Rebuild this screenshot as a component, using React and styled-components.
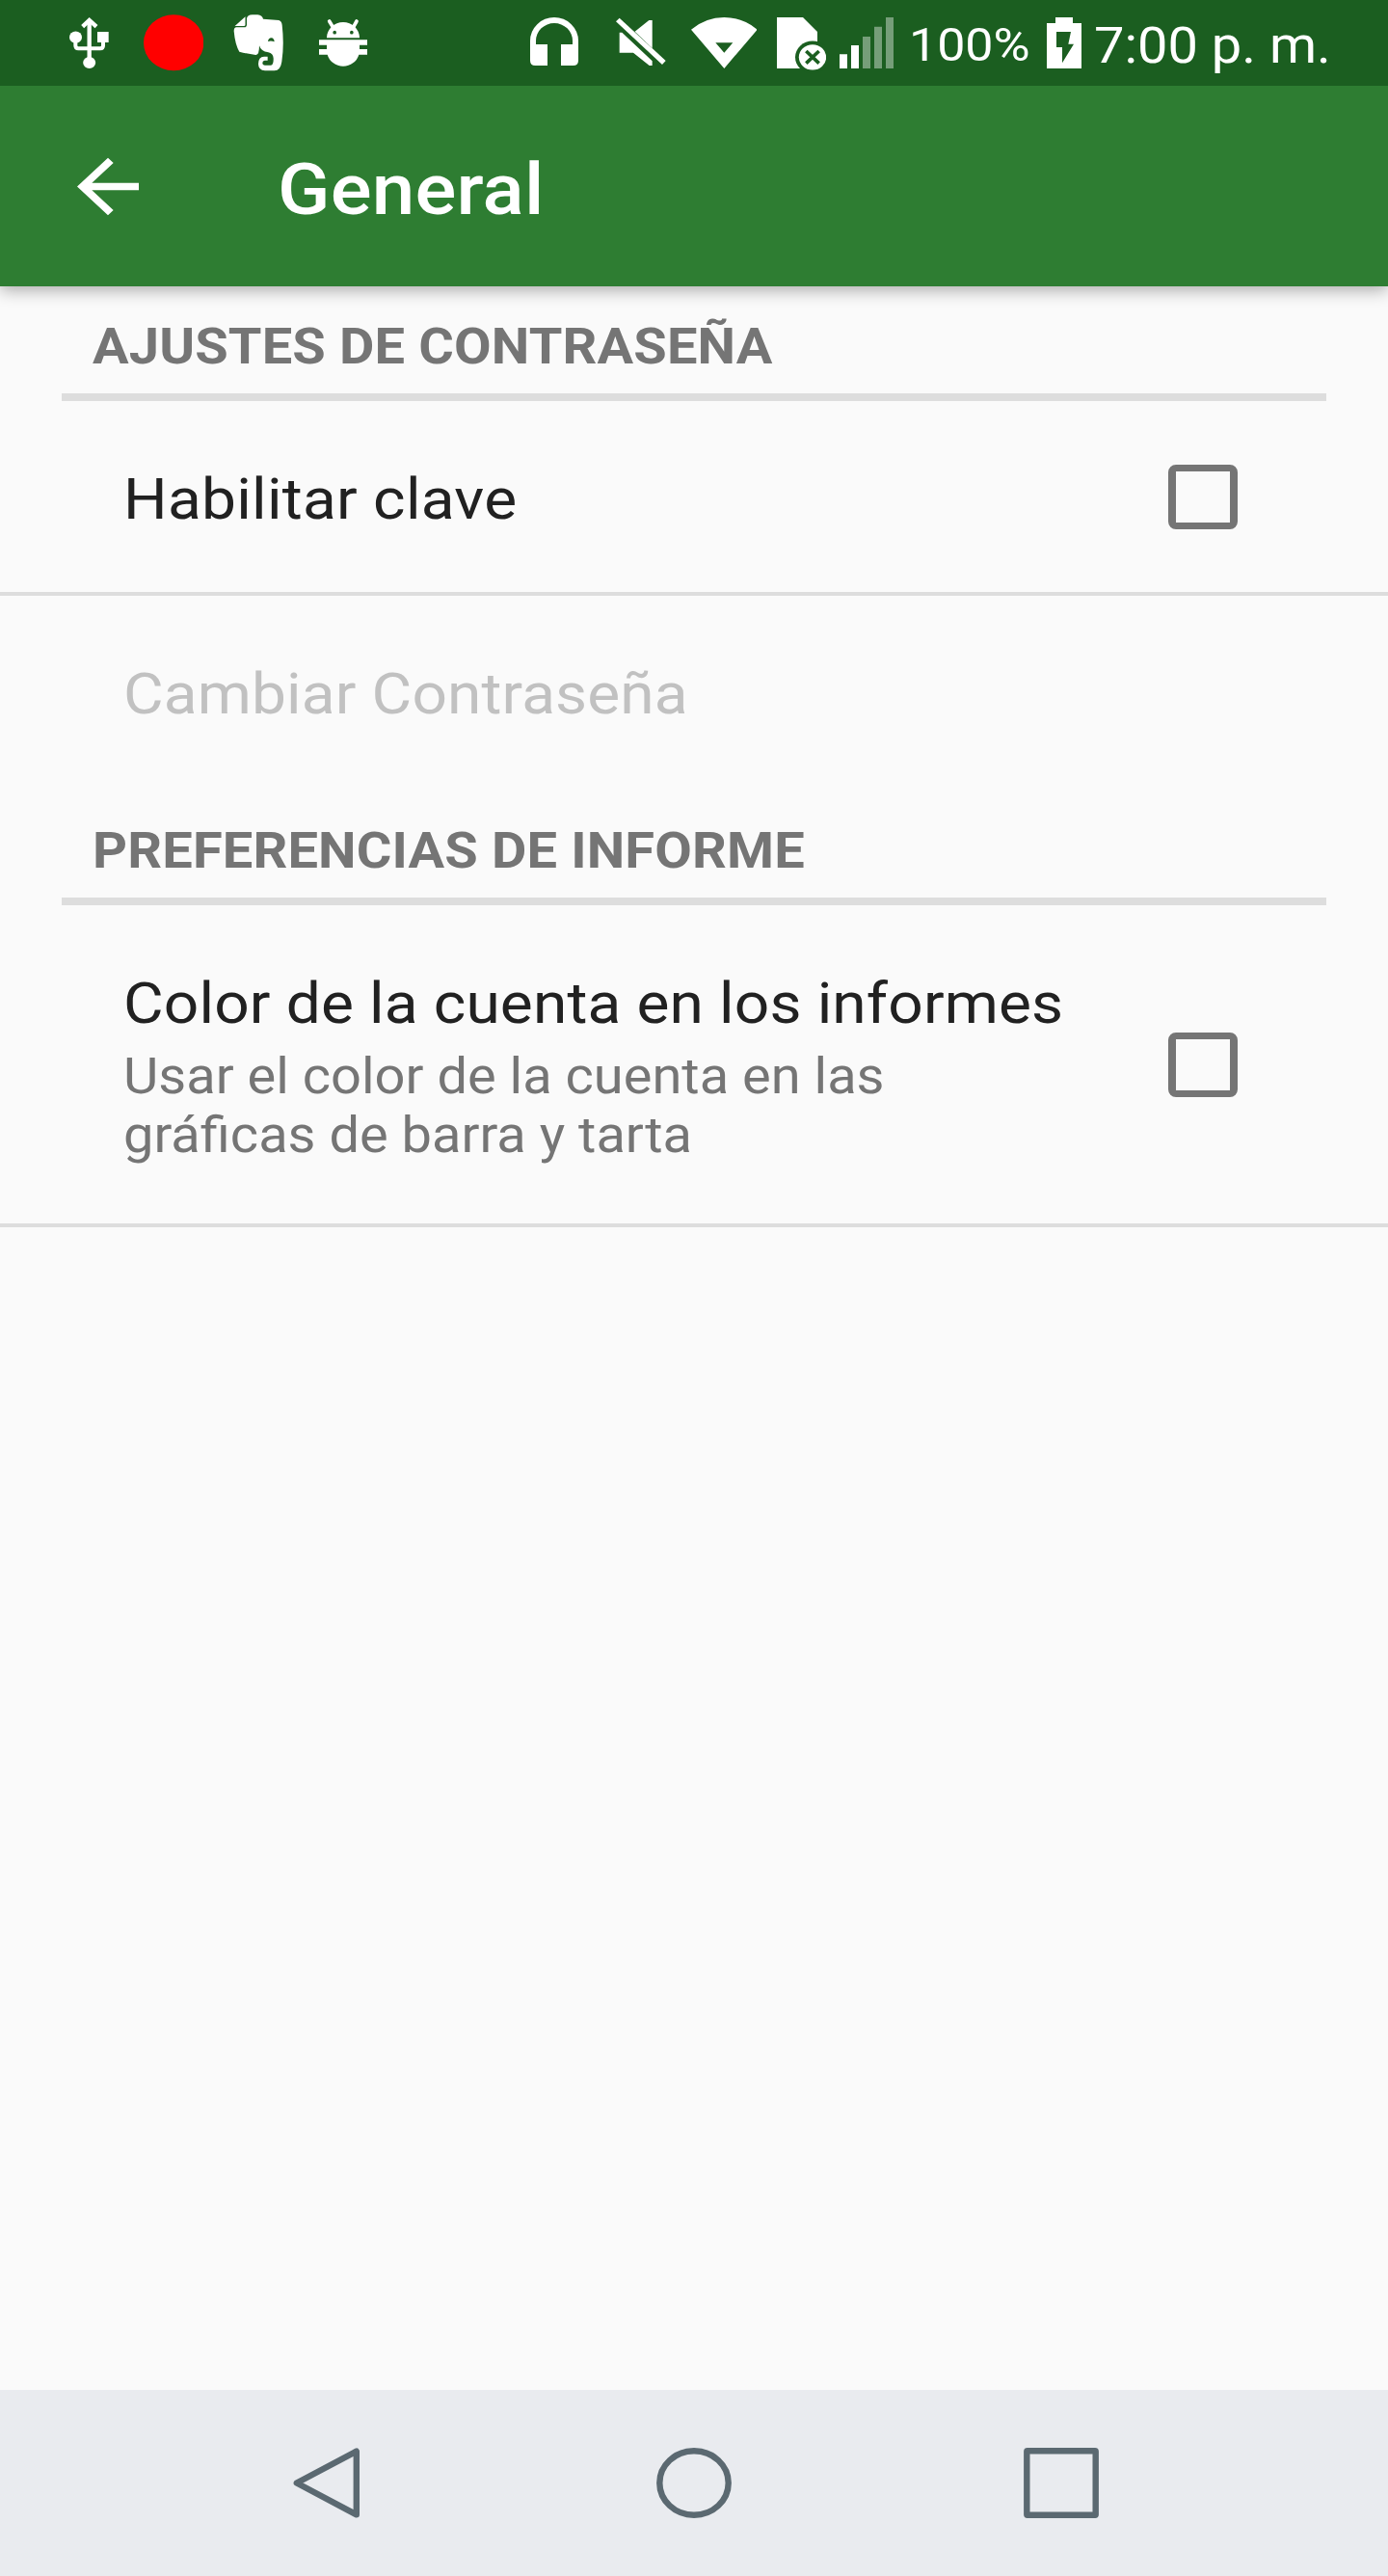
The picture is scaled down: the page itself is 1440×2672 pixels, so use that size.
import React from "react";
import styled, { createGlobalStyle } from "styled-components";

const GlobalStyle = createGlobalStyle`
  html, body { margin: 0; padding: 0; background: #fafafa; }
  *, *::before, *::after { box-sizing: border-box; }
`;

const Screen = styled.div`
  display: flex;
  flex-direction: column;
  width: 1440px;
  height: 2672px;
  overflow: hidden;
  background: #fafafa;
  color: #212121;
  font-family: Roboto, "Liberation Sans", sans-serif;
`;

/* The display is slightly squashed vertically, so glyphs are too. */
const Label = styled.span`
  display: block;
  white-space: nowrap;
  font-size: ${(p) => p.$size}px;
  line-height: ${(p) => p.$line}px;
  font-weight: ${(p) => p.$weight || 400};
  letter-spacing: ${(p) => p.$track || 0}px;
  color: ${(p) => p.$color || "inherit"};
  transform: scaleY(0.9278);
`;

const StatusBar = styled.header`
  display: flex;
  flex: none;
  position: relative;
  z-index: 1;
  height: 89px;
  padding-left: 72px;
  background: #1b5e20;
  color: #fff;
`;

const StatusGlyph = styled.svg`
  display: block;
  flex: none;
  width: ${(p) => p.$w}px;
  height: 89px;
  margin-left: ${(p) => p.$gap || 0}px;
  fill: #fff;
`;

const StatusText = styled.div`
  flex: none;
  width: ${(p) => p.$w}px;
  margin-left: ${(p) => p.$gap}px;
  padding-top: ${(p) => p.$top}px;
`;

const AppBar = styled.div`
  display: flex;
  align-items: center;
  flex: none;
  position: relative;
  height: 208px;
  padding-left: 64px;
  background: #2e7d32;
  color: #fff;
  box-shadow: 0 4px 16px rgba(0, 0, 0, 0.32);
`;

const BackButton = styled.button`
  display: block;
  width: 96px;
  height: 89px;
  padding: 0;
  border: 0;
  background: none;
  margin: 0 128px 0 0;
  svg { display: block; width: 96px; height: 89px; fill: #fff; }
`;

const Title = styled.h1`
  margin: 7px 0 0;
`;

const Settings = styled.main`
  flex: 1;
`;

const SectionHeader = styled.h2`
  height: 119px;
  margin: 0 64px;
  padding: 30px 32px 0;
  border-bottom: 8px solid #dddddd;
`;

const Row = styled.div`
  display: flex;
  align-items: center;
  justify-content: space-between;
  height: ${(p) => p.$height}px;
  padding: 0 156px 0 128px;
  border-bottom: ${(p) => (p.$divided ? "4px solid #dddddd" : "0")};
`;

const RowText = styled.div`
  display: flex;
  flex-direction: column;
  gap: 3px;
  padding-top: ${(p) => p.$shift}px;
`;

const Checkbox = styled.span`
  display: block;
  flex: none;
  width: 72px;
  height: 67px;
  border: solid #757575;
  border-width: 7px 8px;
  border-radius: 8px;
`;

const NavBar = styled.nav`
  display: flex;
  align-items: center;
  flex: none;
  height: 193px;
  padding-left: 304px;
  background: #e9ebef;
`;

const NavGlyph = styled.svg`
  display: block;
  width: ${(p) => p.$w}px;
  height: 73px;
  margin-left: ${(p) => p.$gap || 0}px;
  fill: none;
  stroke: #5b6971;
  stroke-width: 6.4;
  stroke-linejoin: round;
`;

// Status glyphs are drawn on a grid of three units per pixel.
function Glyph({ x, w, gap, children }) {
  return (
    <StatusGlyph $w={w / 3} $gap={gap} viewBox={`${x} 0 ${w} 267`}>
      {children}
    </StatusGlyph>
  );
}

function UsbIcon() {
  return (
    <Glyph x={96} w={123}>
      <g fill="none" stroke="#fff" strokeWidth="12">
        <path d="M158 64V195" strokeWidth="13" />
        <path d="M137 83L158 63L180 83" strokeWidth="13" />
        <path d="M115 116V142Q115 151 124 151H192Q201 151 201 142V130" />
      </g>
      <ellipse cx="115.500" cy="116" rx="19.500" ry="18.500" />
      <ellipse cx="158" cy="195" rx="19.500" ry="18" />
      <path d="M183 99H218V132H183Z" />
    </Glyph>
  );
}

function RecordIcon() {
  return (
    <Glyph x={327} w={187} gap={36}>
      <ellipse cx="420.500" cy="133" rx="93.500" ry="87" fill="#ff0000" />
    </Glyph>
  );
}

function ElephantIcon() {
  return (
    <Glyph x={606} w={158} gap={30.667}>
      <path d="M648 57Q650 47 665 46H682Q697 48 699 59L748 63Q757 66 758 78Q765 140 757 192Q753 220 734 220H705Q684 219 684 199Q684 177 702 176H713V188H704Q697 189 697 196Q697 203 705 203H723Q732 202 731 181Q730 166 715 163Q692 160 687 142Q687 172 676 171Q650 168 625 161Q612 140 608 97Q608 85 616 85H640Q648 85 648 78Z" />
      <path d="M611 81L643.500 52V77Q643.500 81 639 81Z" />
      <path d="M714 129Q716 117 725 118Q733 119 734 130Q724 126 714 129Z" fill="#1b5e20" />
    </Glyph>
  );
}

function DebugIcon() {
  return (
    <Glyph x={873} w={150} gap={36.333}>
      <path d="M905 66L917 86M990 66L979 86" stroke="#fff" strokeWidth="11" strokeLinecap="round" />
      <path d="M897 118A51 49 0 0 1 999 118Z" />
      <path d="M873 124H1023V140H999V153H1023V170H997A51 50 0 0 1 899 170H873V153H897V140H873Z" />
      <circle cx="921.500" cy="101" r="5.500" fill="#1b5e20" />
      <circle cx="974.500" cy="101" r="5.500" fill="#1b5e20" />
    </Glyph>
  );
}

function HeadsetIcon() {
  return (
    <Glyph x={90} w={150} gap={169}>
      <path d="M90 127A75 73 0 0 1 240 127V188Q240 204 224 204H186V138H222V127A57 55 0 0 0 108 127V138H144V204H106Q90 204 90 188Z" />
    </Glyph>
  );
}

function MutedIcon() {
  return (
    <Glyph x={358} w={155} gap={39.333}>
      <path d="M369 56L513 189L502 201L358 67Z" />
      <path d="M369 101H377L471 190V204H462L412 164H369Z" />
      <path d="M417 98L461 63H471V150Z" />
    </Glyph>
  );
}

function WifiIcon() {
  return (
    <Glyph x={590} w={206} gap={25.667}>
      <path fillRule="evenodd" d="M590 92Q636 54 693 54Q750 54 796 92L693 213ZM666 133L693 164L720 133Z" />
    </Glyph>
  );
}

function NoSimIcon() {
  return (
    <Glyph x={858} w={154} gap={20.667}>
      <path d="M858 54H939L984 99V213H858Z" />
      <ellipse cx="969" cy="178" rx="54" ry="50.500" fill="#1b5e20" />
      <ellipse cx="969" cy="178" rx="42.500" ry="39.500" />
      <path d="M949 159L989 197M989 159L949 197" stroke="#1b5e20" strokeWidth="11" />
    </Glyph>
  );
}

function SignalIcon() {
  return (
    <Glyph x={1053} w={168} gap={13.667}>
      <path d="M1053 169H1077V213H1053ZM1089 141H1113V213H1089Z" />
      <path
        fillOpacity="0.4"
        d="M1125 114H1149V213H1125ZM1161 83H1185V213H1161ZM1197 54H1221V213H1197Z"
      />
    </Glyph>
  );
}

function BatteryIcon() {
  return (
    <Glyph x={498} w={108} gap={19}>
      <path
        fillRule="evenodd"
        d="M525 54H579V72H606V213H498V72H525ZM528 99V147H546V196L582 137H565L573 99Z"
      />
    </Glyph>
  );
}

export default function App() {
  return (
    <Screen>
      <GlobalStyle />
      <StatusBar>
        <UsbIcon />
        <RecordIcon />
        <ElephantIcon />
        <DebugIcon />
        <HeadsetIcon />
        <MutedIcon />
        <WifiIcon />
        <NoSimIcon />
        <SignalIcon />
        <StatusText $w={124} $gap={16} $top={15}>
          <Label $size={52} $line={64}>100%</Label>
        </StatusText>
        <BatteryIcon />
        <StatusText $w={260} $gap={13} $top={15}>
          <Label $size={56} $line={64}>7:00 p. m.</Label>
        </StatusText>
      </StatusBar>

      <AppBar>
        <BackButton aria-label="Atrás">
          <svg viewBox="0 0 24 24" preserveAspectRatio="none">
            <path d="M20 11H7.830l5.590-5.590L12 4l-8 8 8 8 1.410-1.410L7.830 13H20v-2z" />
          </svg>
        </BackButton>
        <Title>
          <Label $size={80} $line={96} $weight={500} $track={0.2}>General</Label>
        </Title>
      </AppBar>

      <Settings>
        <SectionHeader>
          <Label $size={56} $line={64} $weight={700} $track={0.14} $color="#757575">AJUSTES DE CONTRASEÑA</Label>
        </SectionHeader>
        <Row $height={202} $divided>
          <RowText $shift={7}>
            <Label $size={64} $line={72} $track={0.27}>Habilitar clave</Label>
          </RowText>
          <Checkbox role="checkbox" aria-checked="false" />
        </Row>
        <Row $height={202}>
          <RowText $shift={4}>
            <Label $size={64} $line={72} $track={0.14} $color="#c1c1c1">Cambiar Contraseña</Label>
          </RowText>
        </Row>

        <SectionHeader>
          <Label $size={56} $line={64} $weight={700} $track={0.14} $color="#757575">PREFERENCIAS DE INFORME</Label>
        </SectionHeader>
        <Row $height={334} $divided>
          <RowText $shift={11}>
            <Label $size={64} $line={72} $track={0.15}>Color de la cuenta en los informes</Label>
            <Label $size={56} $line={66} $color="#757575">
              Usar el color de la cuenta en las
              <br />
              gráficas de barra y tarta
            </Label>
          </RowText>
          <Checkbox role="checkbox" aria-checked="false" />
        </Row>
      </Settings>

      <NavBar>
        <NavGlyph $w={69} viewBox="0 0 69 73">
          <path d="M65.800 3.700V69.300L3.800 36.500Z" />
        </NavGlyph>
        <NavGlyph $w={78} $gap={308} viewBox="0 0 78 73">
          <ellipse cx="39" cy="36.500" rx="35.700" ry="33.200" />
        </NavGlyph>
        <NavGlyph $w={78} $gap={303} viewBox="0 0 78 73">
          <rect x="3.300" y="3.300" width="71.400" height="66.400" rx="0.500" />
        </NavGlyph>
      </NavBar>
    </Screen>
  );
}
